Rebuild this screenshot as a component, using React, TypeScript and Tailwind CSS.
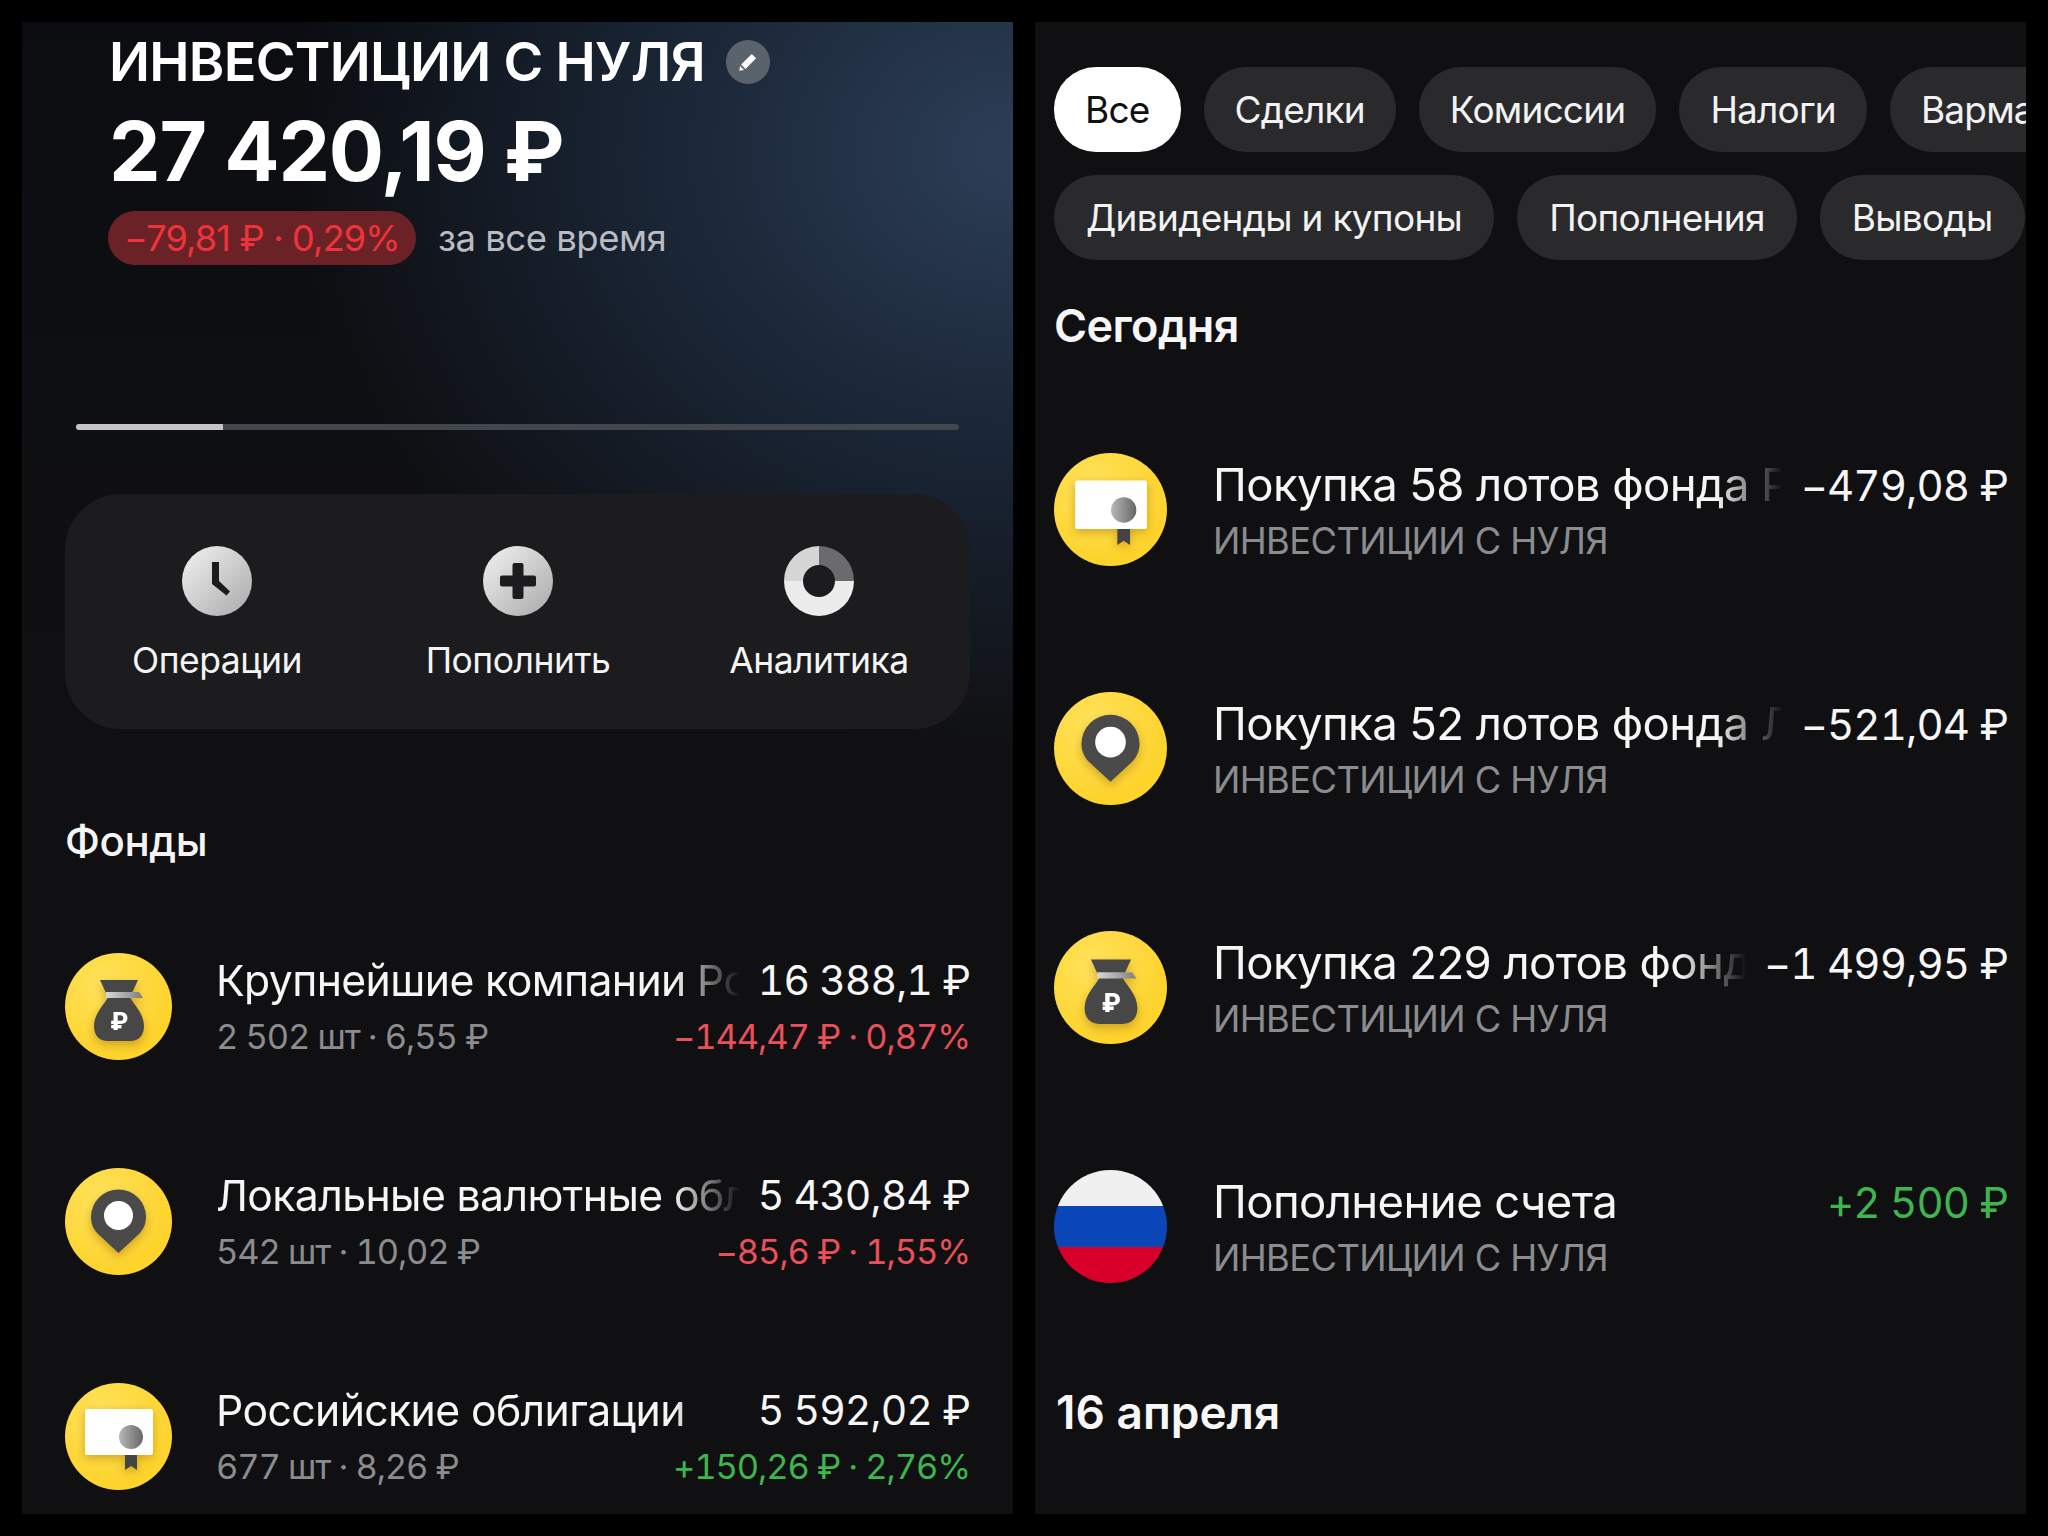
import React from 'react'

const FONT = "font-['Inter','Noto_Sans',sans-serif]"
const TITLE_FADE = '[mask-image:linear-gradient(to_right,black_calc(100%-85px),transparent_calc(100%-18px))]'

function GreyDefs({ id }: { id: string }) {
  return (
    <defs>
      <linearGradient id={id} x1="0" y1="0" x2="1" y2="1">
        <stop offset="0" stopColor="#f2f2f2" />
        <stop offset="1" stopColor="#a9a9ab" />
      </linearGradient>
    </defs>
  )
}

function ClockIcon() {
  return (
    <svg viewBox="0 0 70 70" className="w-[70px] h-[70px]">
      <GreyDefs id="clk" />
      <circle cx="35" cy="35" r="35" fill="url(#clk)" />
      <path d="M30 16h7v19l11 10.5-3.5 4L30 38z" fill="#1c1c1e" />
    </svg>
  )
}

function PlusIcon() {
  return (
    <svg viewBox="0 0 70 70" className="w-[70px] h-[70px]">
      <GreyDefs id="pls" />
      <circle cx="35" cy="35" r="35" fill="url(#pls)" />
      <path d="M29.5 19a2 2 0 0 1 2-2h7a2 2 0 0 1 2 2v10.5H51a2 2 0 0 1 2 2v7a2 2 0 0 1-2 2H40.500v10.500a2 2 0 0 1-2 2h-7a2 2 0 0 1-2-2V40.500H19a2 2 0 0 1-2-2v-7a2 2 0 0 1 2-2h10.500z" fill="#1c1c1e" />
    </svg>
  )
}

function DonutIcon() {
  return (
    <svg viewBox="0 0 70 70" className="w-[70px] h-[70px]">
      <path d="M35 0a35 35 0 0 1 35 35H51a16 16 0 0 0-16-16z" fill="#6b6b6d" />
      <path d="M35 0v19a16 16 0 0 0-16 16H0A35 35 0 0 1 35 0z" fill="#d6d6d6" />
      <path d="M70 35a35 35 0 0 1-70 0h19a16 16 0 0 0 32 0z" fill="#ececec" />
    </svg>
  )
}

function BagIcon() {
  return (
    <svg viewBox="0 0 107 107" className="w-full h-full drop-shadow-[0_4px_5px_rgba(150,100,0,0.45)]">
      <defs>
        <linearGradient id="band" x1="0" x2="1" y1="0" y2="0">
          <stop offset="0" stopColor="#d8d8d8" />
          <stop offset="1" stopColor="#7d7d7d" />
        </linearGradient>
      </defs>
      <path d="M35 27h38l-6 13H41z" fill="#474747" />
      <path d="M43 44h22c3 7 14 16 14 29 0 9-5 15-14 15H43c-9 0-14-6-14-15 0-13 11-22 14-29z" fill="#474747" />
      <path d="M41 39h33l4 6H41z" fill="url(#band)" />
      <text x="54" y="77" textAnchor="middle" fontSize="24" fontWeight="800" fill="#fff" fontFamily="Inter, sans-serif">₽</text>
    </svg>
  )
}

function PinIcon() {
  return (
    <svg viewBox="0 0 107 107" className="w-full h-full drop-shadow-[0_4px_5px_rgba(150,100,0,0.45)]">
      <path d="M53.500 85 33 66c-5-5-7-11-7-17a27.500 27.500 0 0 1 55 0c0 6-2 12-7 17z" fill="#4a4a4a" />
      <circle cx="53.500" cy="47.500" r="14.500" fill="#fff" />
    </svg>
  )
}

function CertificateIcon() {
  return (
    <svg viewBox="0 0 107 107" className="w-full h-full drop-shadow-[0_3px_5px_rgba(150,100,0,0.45)]">
      <defs>
        <linearGradient id="seal" x1="0" x2="1" y1="0" y2="0">
          <stop offset="0" stopColor="#b8b8b8" />
          <stop offset="1" stopColor="#666" />
        </linearGradient>
      </defs>
      <path d="M60 70h12v17l-6-4-6 4z" fill="#444" />
      <rect x="20" y="26" width="68" height="46" rx="2" fill="#fff" />
      <circle cx="66" cy="54" r="12" fill="url(#seal)" />
    </svg>
  )
}

function FlagIcon() {
  return (
    <div className="w-full h-full rounded-full overflow-hidden flex flex-col">
      <div className="h-[32%] bg-[#f0f0f0]" />
      <div className="h-[36%] bg-[#0b46b8]" />
      <div className="flex-1 bg-[#d8002a]" />
    </div>
  )
}

function Badge({ children }: { children: React.ReactNode }) {
  return (
    <div className="w-full h-full rounded-full overflow-hidden bg-[radial-gradient(circle_at_35%_30%,#ffe25c,#fdd32c_70%)]">
      {children}
    </div>
  )
}

function IconFor({ kind }: { kind: string }) {
  if (kind === 'flag') return <FlagIcon />
  return (
    <Badge>
      {kind === 'bag' && <BagIcon />}
      {kind === 'pin' && <PinIcon />}
      {kind === 'cert' && <CertificateIcon />}
    </Badge>
  )
}

const funds = [
  { icon: 'bag', title: 'Крупнейшие компании России', amount: '16 388,1 ₽', sub: '2 502 шт · 6,55 ₽', change: '−144,47 ₽ · 0,87%', up: false },
  { icon: 'pin', title: 'Локальные валютные облигации', amount: '5 430,84 ₽', sub: '542 шт · 10,02 ₽', change: '−85,6 ₽ · 1,55%', up: false },
  { icon: 'cert', title: 'Российские облигации', amount: '5 592,02 ₽', sub: '677 шт · 8,26 ₽', change: '+150,26 ₽ · 2,76%', up: true },
]

const operations = [
  { icon: 'cert', title: 'Покупка 58 лотов фонда Российские облигации', amount: '−479,08 ₽', up: false },
  { icon: 'pin', title: 'Покупка 52 лотов фонда Локальные валютные', amount: '−521,04 ₽', up: false },
  { icon: 'bag', title: 'Покупка 229 лотов фонда Крупнейшие компании', amount: '−1 499,95 ₽', up: false },
  { icon: 'flag', title: 'Пополнение счета', amount: '+2 500 ₽', up: true },
]

const chipsTop = ['Все', 'Сделки', 'Комиссии', 'Налоги', 'Вармарт']
const chipsBottom = ['Дивиденды и купоны', 'Пополнения', 'Выводы']

function Chip({ label, active, wide }: { label: string; active?: boolean; wide?: boolean }) {
  return (
    <div className={`h-[85px] shrink-0 rounded-[42px] flex items-center text-[37px] ${wide ? 'px-[32px] tracking-[-0.7px]' : 'px-[31px] tracking-[-0.8px]'} ${active ? 'bg-white text-[#111]' : 'bg-[#2a2a2c] text-[#f2f2f2]'}`}>
      {label}
    </div>
  )
}

function ActionButton({ label, icon }: { label: string; icon: React.ReactNode }) {
  return (
    <div className="flex flex-col items-center w-[200px]">
      {icon}
      <div className="mt-[23px] text-[35.500px] leading-[44px] tracking-[-0.5px] text-[#f4f4f4] whitespace-nowrap">{label}</div>
    </div>
  )
}

export default function App() {
  return (
    <div className={`w-[2048px] h-[1536px] bg-black p-[22px] flex gap-[22px] ${FONT}`}>
      <div className="w-[991px] h-[1492px] overflow-hidden bg-[radial-gradient(ellipse_720px_600px_at_100%_130px,#2c3e57_0%,#1a2535_50%,transparent_100%),linear-gradient(to_bottom,#0b0d11_0px,#101012_640px)]">
        <div className="pt-[10px] pl-[87px] flex items-center">
          <div className="text-[54px] leading-[60px] font-semibold tracking-[-0.7px] text-white whitespace-nowrap">ИНВЕСТИЦИИ С НУЛЯ</div>
          <div className="ml-[21px] w-[44px] h-[44px] rounded-full bg-[#5a626c] flex items-center justify-center">
            <svg viewBox="0 0 24 24" className="w-[30px] h-[30px]">
              <path d="M15 5.500 18.500 9 10 17.500l-3.500-3.500z" fill="#fff" />
              <path d="M5.700 15.200 8.800 18.300 5 19z" fill="#fff" />
            </svg>
          </div>
        </div>
        <div className="mt-[18px] pl-[87px] text-[82px] leading-[84px] font-bold tracking-[-1.200px] text-white whitespace-nowrap">27 420,19 ₽</div>
        <div className="mt-[17px] h-[54px] pl-[86px] flex items-center">
          <div className="h-[54px] px-[16px] rounded-[27px] bg-[#6b2226] flex items-center text-[36px] tracking-[-0.8px] text-[#ee343a] whitespace-nowrap">−79,81 ₽ · 0,29%</div>
          <div className="ml-[22px] text-[36.500px] leading-[54px] tracking-[-0.5px] text-[#b9bcc2] whitespace-nowrap">за все время</div>
        </div>

        <div className="mt-[159px] mx-[54px] h-[6px] rounded-full bg-[#42464d] overflow-hidden">
          <div className="w-[147px] h-full bg-[#c4c4c6]" />
        </div>

        <div className="mt-[64px] ml-[43px] w-[905px] h-[235px] rounded-[56px] bg-[#1c1c1e] pt-[52px] pl-[52px] flex gap-[101px]">
          <ActionButton label="Операции" icon={<ClockIcon />} />
          <ActionButton label="Пополнить" icon={<PlusIcon />} />
          <ActionButton label="Аналитика" icon={<DonutIcon />} />
        </div>

        <div className="mt-[88px] pl-[43px] text-[42px] leading-[48px] font-medium tracking-[-0.4px] text-[#f4f4f4]">Фонды</div>

        <div className="mt-[88px] pl-[43px] pr-[43px] flex flex-col gap-[108px]">
          {funds.map((f) => (
            <div key={f.title} className="flex items-center gap-[44px]">
              <div className="w-[107px] h-[107px] shrink-0">
                <IconFor kind={f.icon} />
              </div>
              <div className="flex-1 min-w-0 pt-[3px] flex flex-col gap-[10px]">
                <div className="flex justify-between h-[48px] items-center">
                  <div className={`flex-1 min-w-0 overflow-hidden whitespace-nowrap text-[42.700px] tracking-[-0.6px] text-[#f6f6f6] ${TITLE_FADE}`}>{f.title}</div>
                  <div className="shrink-0 text-[41px] tracking-[-0.9px] tabular-nums text-[#f6f6f6]">{f.amount}</div>
                </div>
                <div className="flex justify-between h-[44px] items-center text-[34.500px] tracking-[-1.100px] tabular-nums">
                  <div className="text-[#8b8c8f] whitespace-nowrap">{f.sub}</div>
                  <div className={`whitespace-nowrap ${f.up ? 'text-[#3fb54f]' : 'text-[#e8505a]'}`}>{f.change}</div>
                </div>
              </div>
            </div>
          ))}
        </div>
      </div>

      <div className="w-[991px] h-[1492px] overflow-hidden bg-[#101012] pt-[45px]">
        <div className="pl-[19px] flex gap-[23px]">
          {chipsTop.map((c, i) => (
            <Chip key={c} label={c} active={i === 0} />
          ))}
        </div>
        <div className="mt-[23px] pl-[19px] flex gap-[23px]">
          {chipsBottom.map((c) => (
            <Chip key={c} label={c} wide />
          ))}
        </div>

        <div className="mt-[40px] pl-[19px] text-[45px] leading-[52px] font-semibold tracking-[-0.6px] text-[#f6f6f6]">Сегодня</div>

        <div className="mt-[101px] pl-[19px] pr-[18px] flex flex-col gap-[126px]">
          {operations.map((o) => (
            <div key={o.title} className="flex items-center gap-[46px]">
              <div className="w-[113px] h-[113px] shrink-0">
                <IconFor kind={o.icon} />
              </div>
              <div className="flex-1 min-w-0 pt-[5px] flex flex-col gap-[8px]">
                <div className="flex justify-between h-[50px] items-center">
                  <div className={`flex-1 min-w-0 overflow-hidden whitespace-nowrap text-[45.500px] tracking-[-0.6px] text-[#f6f6f6] ${TITLE_FADE}`}>{o.title}</div>
                  <div className={`shrink-0 text-[42px] tracking-[-0.9px] tabular-nums ${o.up ? 'text-[#3fb54f]' : 'text-[#f6f6f6]'}`}>{o.amount}</div>
                </div>
                <div className="h-[46px] flex items-center text-[36.300px] tracking-[-0.6px] text-[#8b8c8f] whitespace-nowrap">ИНВЕСТИЦИИ С НУЛЯ</div>
              </div>
            </div>
          ))}
        </div>

        <div className="mt-[103px] pl-[21px] text-[46px] leading-[52px] font-semibold tracking-[0px] text-[#f6f6f6]">16 апреля</div>
      </div>
    </div>
  )
}
